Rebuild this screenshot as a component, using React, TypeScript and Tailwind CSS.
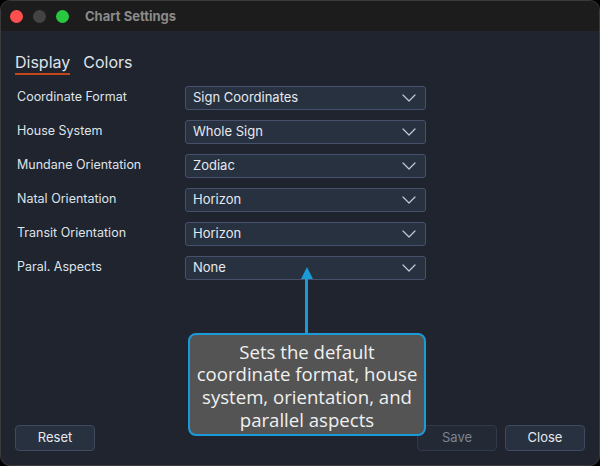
import { useState } from "react";

const rows = [
    { label: "Coordinate Format", value: "Sign Coordinates" },
    { label: "House System", value: "Whole Sign" },
    { label: "Mundane Orientation", value: "Zodiac" },
    { label: "Natal Orientation", value: "Horizon" },
    { label: "Transit Orientation", value: "Horizon" },
    { label: "Paral. Aspects", value: "None" },
];

function Chevron() {
    return (
        <svg width="14" height="8" viewBox="0 0 14 8" className="text-[#c3c9d3]">
            <polyline
                points="1,1 7,7 13,1"
                fill="none"
                stroke="currentColor"
                strokeWidth="1.2"
                strokeLinecap="round"
                strokeLinejoin="round"
            />
        </svg>
    );
}

function Select({ value }: { value: string }) {
    return (
        <div className="flex items-center justify-between w-[241px] h-[24px] rounded-[3px] border border-[#46526c] bg-[#283140] pl-[7px] pr-[9px]">
            <span className="text-[13px] text-[#e6e9ee]">{value}</span>
            <Chevron />
        </div>
    );
}

function Button({ children, disabled }: { children: string; disabled?: boolean }) {
    return (
        <button
            className={
                disabled
                    ? "w-[80px] h-[26px] rounded-[4px] border border-[#323a49] bg-[#232a35] text-[13px] text-[#7b8491]"
                    : "w-[80px] h-[26px] rounded-[4px] border border-[#3f4a5f] bg-[#283140] text-[13px] text-[#e6e9ee]"
            }
        >
            {children}
        </button>
    );
}

export default function App() {
    const [tab, setTab] = useState("Display");

    return (
        <div className="w-[600px] h-[466px] bg-black font-['Inter',sans-serif]">
            <div className="flex flex-col w-full h-full rounded-[10px] overflow-hidden border border-[#3a3a3a] bg-[#1f242e]">
                <header className="flex items-center h-[30px] bg-[#1c1c1c] pl-[9px] pt-[1px] shrink-0">
                    <span className="w-[13px] h-[13px] rounded-full bg-[#fe4f4f]" />
                    <span className="w-[13px] h-[13px] rounded-full bg-[#434343] ml-[10px]" />
                    <span className="w-[13px] h-[13px] rounded-full bg-[#29c840] ml-[10px]" />
                    <span className="ml-[16px] text-[13px] font-bold text-[#8b8b8b]">Chart Settings</span>
                </header>

                <main className="relative flex flex-col flex-1 px-[14px] pb-[14px]">
                    <nav className="flex gap-[13px] mt-[21px]">
                        {["Display", "Colors"].map((t) => (
                            <button
                                key={t}
                                onClick={() => setTab(t)}
                                className={
                                    t === tab
                                        ? "text-[16px] leading-[20px] text-[#dfe3ea] border-b-2 border-[#c2461a] pb-[1px]"
                                        : "text-[16px] leading-[20px] text-[#dfe3ea] border-b-2 border-transparent pb-[1px]"
                                }
                            >
                                {t}
                            </button>
                        ))}
                    </nav>

                    <div className="flex flex-col gap-[10px] mt-[11px]">
                        {rows.map((row) => (
                            <div key={row.label} className="flex items-center">
                                <span className="w-[170px] pl-[2px] -mt-[2px] text-[12.5px] text-[#dfe3ea]">
                                    {row.label}
                                </span>
                                <Select value={row.value} />
                            </div>
                        ))}
                    </div>

                    <footer className="flex items-center mt-auto">
                        <Button>Reset</Button>
                        <div className="ml-auto flex gap-[8px]">
                            <Button disabled>Save</Button>
                            <Button>Close</Button>
                        </div>
                    </footer>

                    {/* tooltip callout over the form */}
                    <div className="absolute left-[187px] top-[236px] flex flex-col items-center w-[238px]">
                        <div className="flex flex-col items-center ml-[-1px]">
                            <svg width="12" height="12" viewBox="0 0 12 12">
                                <polygon points="6,0 12,12 0,12" fill="#1b9ad8" />
                            </svg>
                            <div className="w-[3px] h-[54px] bg-[#1b9ad8]" />
                        </div>
                        <div className="w-full h-[103px] rounded-[8px] border-2 border-[#1b9ad8] bg-[#545454] flex items-center justify-center pt-[3px]">
                            <p className="font-['Open_Sans',sans-serif] text-[18.6px] leading-[22.7px] text-[#f0f0f0] text-center">
                                Sets the default
                                <br />
                                coordinate format, house
                                <br />
                                system, orientation, and
                                <br />
                                parallel aspects
                            </p>
                        </div>
                    </div>
                </main>
            </div>
        </div>
    );
}
